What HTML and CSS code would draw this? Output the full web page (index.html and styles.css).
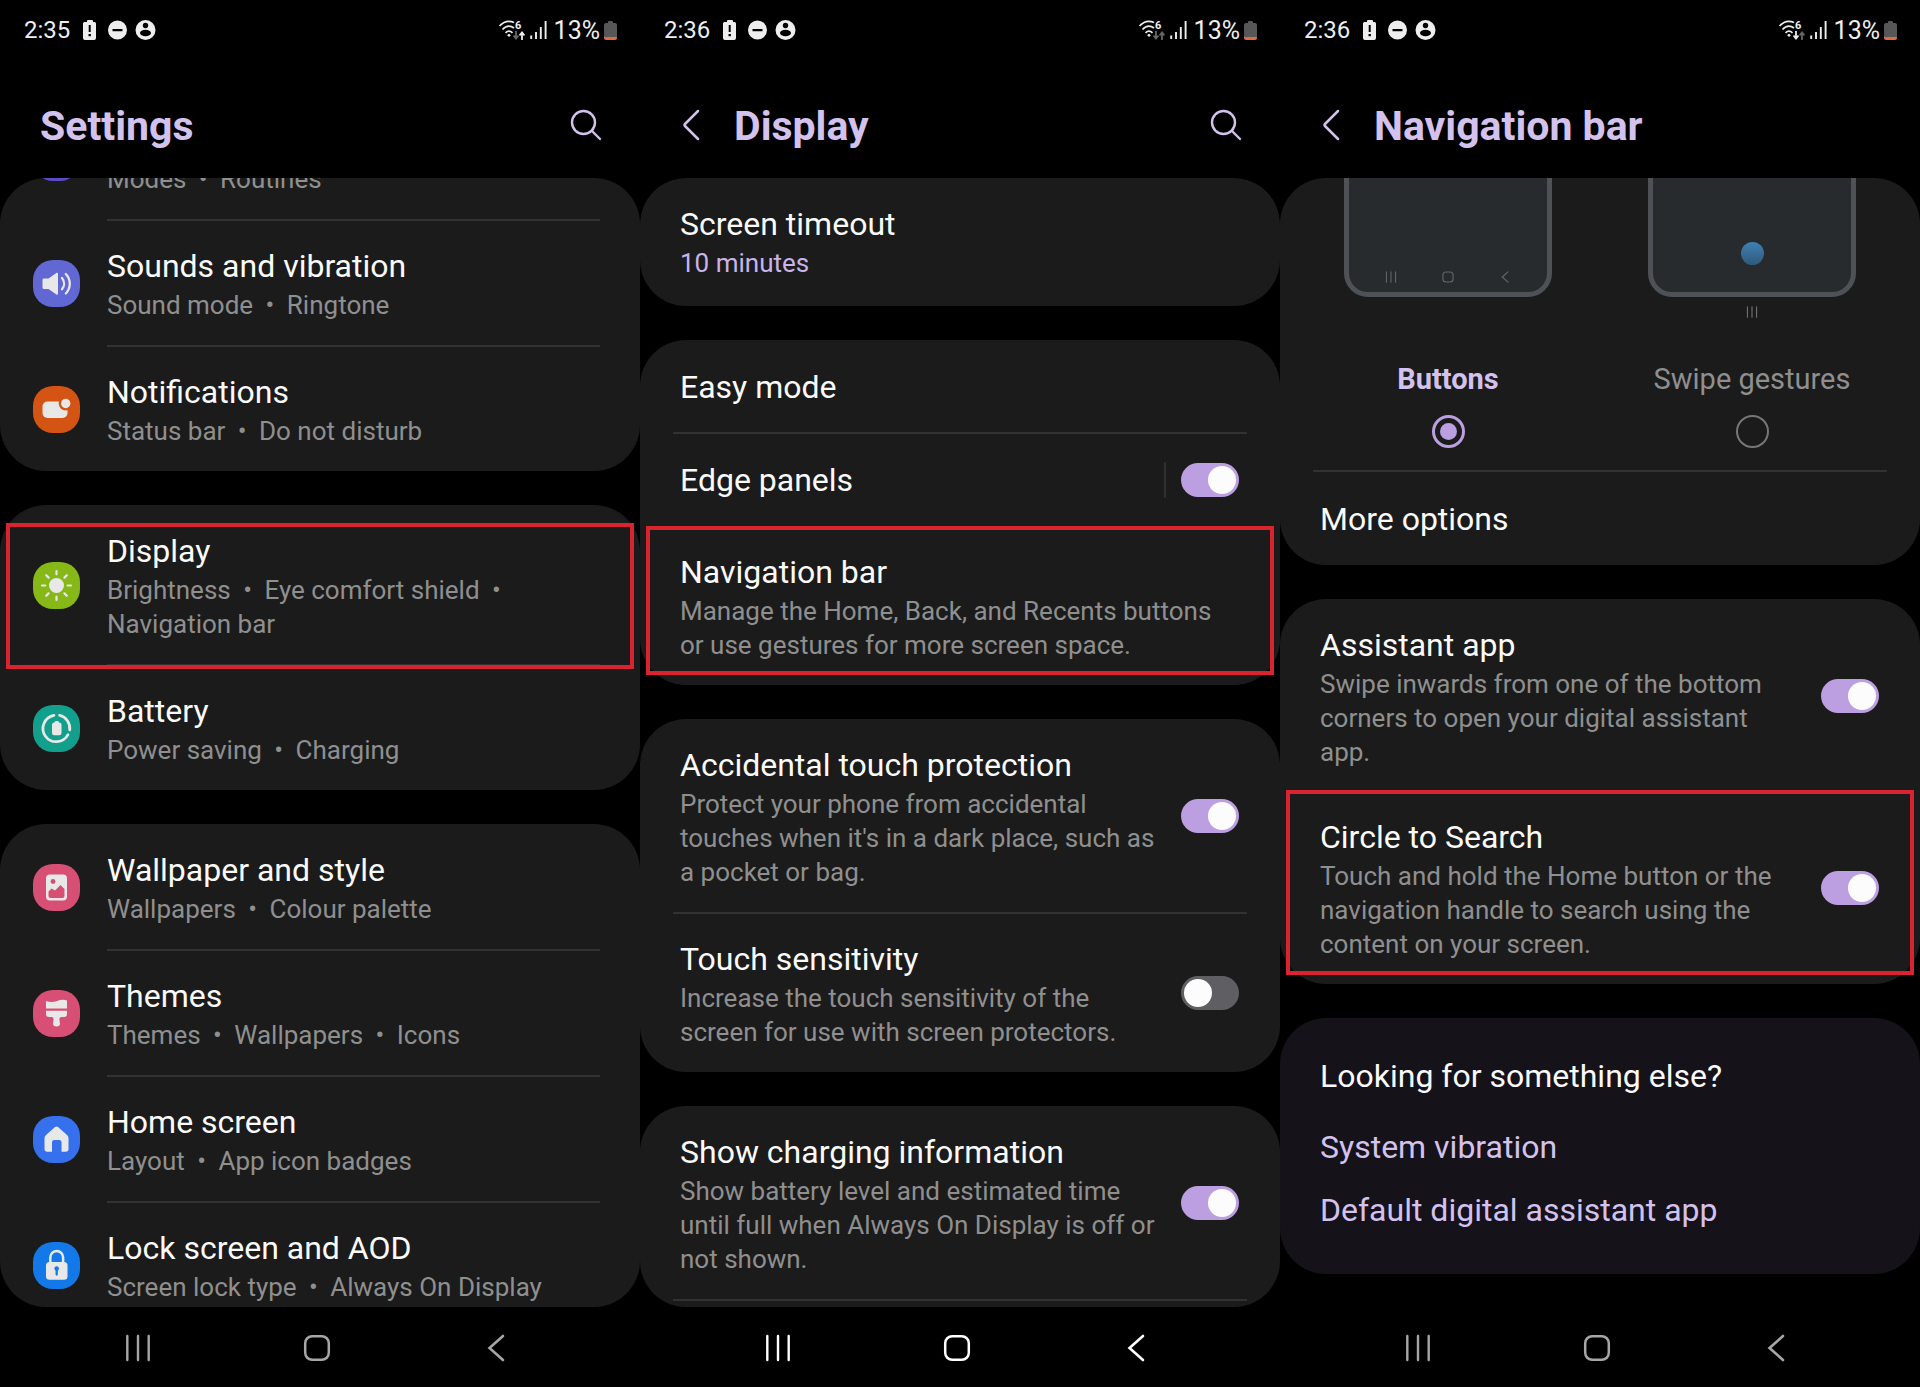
FILE: index.html
```html
<!DOCTYPE html>
<html lang="en">
  <head>
    <meta charset="UTF-8" />
    <meta name="viewport" content="width=device-width, initial-scale=1.0" />
    <title>Settings</title>
    <link rel="stylesheet" href="styles.css">
  </head>
  <body>
    <!-- Shared icons -->
    <svg class="sprite" aria-hidden="true">
      <symbol id="i-notices" viewBox="0 0 74 20">
        <path fill="currentColor" fill-rule="evenodd" d="M4 2V1q0-1 1-1h4q1 0 1 1v1h1.500Q13 2 13 3.500V18q0 2-2 2H2q-2 0-2-2V3.500Q0 2 1.500 2zM5.700 5v7h2V5zM5.500 14v2.300h2.400V14z" />
        <path fill="currentColor" fill-rule="evenodd" d="M34.500.500a9.500 9.500 0 1 1 0 19 9.500 9.500 0 0 1 0-19zM29.500 9v2.200h10V9z" />
        <circle cx="62.500" cy="10" r="10" fill="currentColor" />
        <circle cx="62.500" cy="5.500" r="2.700" />
        <ellipse cx="62.500" cy="13" rx="5.500" ry="3.300" />
      </symbol>
      <symbol id="i-wifi" viewBox="0 0 26 20">
        <g fill="none" stroke="currentColor" stroke-width="1.700">
          <path d="M.5 6Q7-1 15 2.500" />
          <path d="M3.500 9.500Q9 3.500 15 8" />
          <path d="M6.500 12.800q3.500-3.300 7 0" />
        </g>
        <circle cx="10" cy="15.300" r="1.400" fill="currentColor" />
        <text x="16" y="8.500" font-size="11" font-weight="700" fill="currentColor">6</text>
      </symbol>
      <symbol id="i-down" viewBox="0 0 6 9">
        <path d="M3 0v7M.5 4.500L3 7.500l2.500-3" fill="none" stroke="currentColor" stroke-width="1.800" />
      </symbol>
      <symbol id="i-up" viewBox="0 0 6 9">
        <path d="M3 9V2M.5 4.500L3 1.500l2.500 3" fill="none" stroke="currentColor" stroke-width="1.800" />
      </symbol>
      <symbol id="i-signal" viewBox="0 0 17 18">
        <path d="M1.200 18v-3.500M6 18v-7M10.800 18V6M15.600 18V0" stroke="currentColor" stroke-width="1.900" />
      </symbol>
      <symbol id="i-level" viewBox="0 0 13 19">
        <path fill="#575757" d="M4 2V1q0-1 1-1h3q1 0 1 1v1h2q2 0 2 2v12H0V4q0-2 2-2z" />
        <path fill="#e0694a" d="M0 16h13v1q0 2-2 2H2q-2 0-2-2z" />
      </symbol>
      <symbol id="i-search" viewBox="0 0 32 32">
        <g fill="none" stroke="currentColor" stroke-width="2.400" stroke-linecap="round">
          <circle cx="13.500" cy="13.500" r="11.500" />
          <path d="M22 22l8 8" />
        </g>
      </symbol>
      <symbol id="i-back" viewBox="0 0 18 32">
        <path d="M16 2L3 15q-1 1 0 2l13 13" fill="none" stroke="currentColor" stroke-width="2.500" stroke-linecap="round" />
      </symbol>
      <symbol id="i-recents" viewBox="0 0 28 28">
        <path d="M3.300 2v24M14 2v24M24.700 2v24" stroke="currentColor" stroke-width="2.400" stroke-linecap="round" />
      </symbol>
      <symbol id="i-home" viewBox="0 0 28 28">
        <rect x="2.200" y="2.200" width="23.600" height="23.600" rx="7" fill="none" stroke="currentColor" stroke-width="2.500" />
      </symbol>
      <symbol id="i-left" viewBox="0 0 28 28">
        <path d="M21 2L7.500 14 21 26" fill="none" stroke="currentColor" stroke-width="2.600" stroke-linecap="round" />
      </symbol>
    </svg>

    <main class="screens">
      <!-- Settings -->
      <section class="phone">
        <div class="status">
          <span>2:35</span>
          <svg class="notices"><use href="#i-notices" /></svg>
          <div class="status-right">
            <div class="wifi">
              <svg class="wifi-waves"><use href="#i-wifi" /></svg>
              <svg class="arrow arrow-down dim"><use href="#i-down" /></svg>
              <svg class="arrow arrow-up"><use href="#i-up" /></svg>
            </div>
            <svg class="signal"><use href="#i-signal" /></svg>
            <span class="percent">13%</span>
            <svg class="level"><use href="#i-level" /></svg>
          </div>
        </div>
        <header class="topbar">
          <h1>Settings</h1>
          <button class="search" aria-label="Search"><svg><use href="#i-search" /></svg></button>
        </header>
        <div class="viewport">
          <div class="list list-settings">
            <div class="card">
              <a class="row row-modes" href="#">
                <span class="icon icon-modes"></span>
                <span class="text">
                  <span class="sub">Modes <span class="dot">•</span> Routines</span>
                </span>
              </a>
              <a class="row" href="#">
                <span class="icon icon-sounds">
                  <svg viewBox="0 0 47 47">
                    <path fill="#e8e8e8" d="M11 18.500h4.500l7.500-5.300c1-.8 2-.4 2 .8v19.500c0 1.200-1 1.600-2 .8L15.500 29H11c-1 0-1.500-.6-1.500-1.500V20c0-.9.6-1.500 1.500-1.500z" />
                    <path d="M29 18c2.700 3.300 2.700 8 0 11.300M32.800 14c5.300 5.500 5.300 14 0 19.500" fill="none" stroke="#e8e8e8" stroke-width="2.300" stroke-linecap="round" />
                  </svg>
                </span>
                <span class="text">
                  <span class="title">Sounds and vibration</span>
                  <span class="sub">Sound mode <span class="dot">•</span> Ringtone</span>
                </span>
              </a>
              <a class="row" href="#">
                <span class="icon icon-notifications">
                  <svg viewBox="0 0 47 47">
                    <rect x="9.500" y="15.500" width="25" height="16.500" rx="5" fill="#e8e8e8" />
                    <circle cx="32.700" cy="17.500" r="7" fill="#d35413" />
                    <circle cx="32.700" cy="17.500" r="4.700" fill="#e8e8e8" />
                  </svg>
                </span>
                <span class="text">
                  <span class="title">Notifications</span>
                  <span class="sub">Status bar <span class="dot">•</span> Do not disturb</span>
                </span>
              </a>
            </div>
            <div class="card">
              <a class="row marked marked-display" href="#">
                <span class="icon icon-display">
                  <svg viewBox="0 0 47 47">
                    <circle cx="23.500" cy="23.500" r="7.500" fill="#e8e8e8" />
                    <path d="M23.500 9v3.300M23.500 34.700V38M9 23.500h3.300M34.700 23.500H38M13.200 13.200l2.400 2.400M31.400 31.400l2.400 2.400M33.800 13.200l-2.400 2.400M15.600 31.400l-2.400 2.400" stroke="#e8e8e8" stroke-width="2.200" stroke-linecap="round" />
                  </svg>
                </span>
                <span class="text">
                  <span class="title">Display</span>
                  <span class="sub">Brightness <span class="dot">•</span> Eye comfort shield <span class="dot">•</span> Navigation bar</span>
                </span>
              </a>
              <a class="row" href="#">
                <span class="icon icon-battery">
                  <svg viewBox="0 0 47 47">
                    <path d="M21 10.300a13.300 13.300 0 1 0 14 19.400M26.500 10.300A13.300 13.300 0 0 1 36.700 25" fill="none" stroke="#e8e8e8" stroke-width="2.700" stroke-linecap="round" />
                    <path fill="#e8e8e8" d="M21.500 17.500q0-1.500 1.500-1.500h1.500q1.500 0 1.500 1.500 2.500 0 2.500 2.500v8q0 2.300-2.300 2.300h-5Q19 30.300 19 28v-8q0-2.500 2.500-2.500z" />
                  </svg>
                </span>
                <span class="text">
                  <span class="title">Battery</span>
                  <span class="sub">Power saving <span class="dot">•</span> Charging</span>
                </span>
              </a>
            </div>
            <div class="card">
              <a class="row" href="#">
                <span class="icon icon-wallpaper">
                  <svg viewBox="0 0 47 47">
                    <rect x="13" y="10.500" width="21" height="26" rx="4" fill="#e8e8e8" />
                    <circle cx="20" cy="17.500" r="2.400" fill="#d84f76" />
                    <path fill="#d84f76" d="M15.500 27.500l3-3 3.500 2 5.500-5.500 4 4V32q0 2-2 2h-12q-2 0-2-2z" />
                  </svg>
                </span>
                <span class="text">
                  <span class="title">Wallpaper and style</span>
                  <span class="sub">Wallpapers <span class="dot">•</span> Colour palette</span>
                </span>
              </a>
              <a class="row" href="#">
                <span class="icon icon-themes">
                  <svg viewBox="0 0 47 47">
                    <path fill="#e8e8e8" d="M13 11q6 2 11 0t10-.5v8H13z" />
                    <path fill="#e8e8e8" d="M13 20.700h21V24q0 3-3 3h-3q-2 .5-1.500 3l.5 4q-.5 2.500-3.500 2.500T20 34l.5-4q.5-2.500-1.500-3h-3q-3 0-3-3z" />
                  </svg>
                </span>
                <span class="text">
                  <span class="title">Themes</span>
                  <span class="sub">Themes <span class="dot">•</span> Wallpapers <span class="dot">•</span> Icons</span>
                </span>
              </a>
              <a class="row" href="#">
                <span class="icon icon-homescreen">
                  <svg viewBox="0 0 47 47">
                    <path fill="#e8e8e8" d="M22 11q1.500-1.200 3 0l9 8q1.500 1.300 1.500 3v11q0 2.700-2.700 2.700H28.500v-9.500q0-2.200-2.200-2.200h-5.100q-2.200 0-2.200 2.200v9.500h-4.800q-2.700 0-2.700-2.700V22q0-1.700 1.500-3z" />
                  </svg>
                </span>
                <span class="text">
                  <span class="title">Home screen</span>
                  <span class="sub">Layout <span class="dot">•</span> App icon badges</span>
                </span>
              </a>
              <a class="row" href="#">
                <span class="icon icon-lock">
                  <svg viewBox="0 0 47 47">
                    <path d="M17.300 21v-5.500a6.400 6.400 0 0 1 12.800 0V21" fill="none" stroke="#e8e8e8" stroke-width="2.500" />
                    <rect x="13" y="20" width="21.500" height="17.800" rx="3.500" fill="#e8e8e8" />
                    <circle cx="23.700" cy="26.500" r="2.300" fill="#1479e8" />
                    <path d="M23.700 27v5.500" stroke="#1479e8" stroke-width="2.300" stroke-linecap="round" />
                  </svg>
                </span>
                <span class="text">
                  <span class="title">Lock screen and AOD</span>
                  <span class="sub">Screen lock type <span class="dot">•</span> Always On Display</span>
                </span>
              </a>
            </div>
          </div>
        </div>
        <nav class="navbar">
          <button aria-label="Recents"><svg><use href="#i-recents" /></svg></button>
          <button aria-label="Home"><svg><use href="#i-home" /></svg></button>
          <button aria-label="Back"><svg><use href="#i-left" /></svg></button>
        </nav>
      </section>

      <!-- Display -->
      <section class="phone">
        <div class="status">
          <span>2:36</span>
          <svg class="notices"><use href="#i-notices" /></svg>
          <div class="status-right">
            <div class="wifi">
              <svg class="wifi-waves"><use href="#i-wifi" /></svg>
              <svg class="arrow arrow-down dim"><use href="#i-down" /></svg>
              <svg class="arrow arrow-up dim"><use href="#i-up" /></svg>
            </div>
            <svg class="signal"><use href="#i-signal" /></svg>
            <span class="percent">13%</span>
            <svg class="level"><use href="#i-level" /></svg>
          </div>
        </div>
        <header class="topbar">
          <button class="back" aria-label="Back"><svg><use href="#i-back" /></svg></button>
          <h1>Display</h1>
          <button class="search" aria-label="Search"><svg><use href="#i-search" /></svg></button>
        </header>
        <div class="viewport">
          <div class="list">
            <div class="card card-timeout">
              <a class="row row-plain" href="#">
                <span class="text">
                  <span class="title">Screen timeout</span>
                  <span class="sub sub-value">10 minutes</span>
                </span>
              </a>
            </div>
            <div class="card">
              <a class="row row-plain row-single" href="#">
                <span class="text"><span class="title">Easy mode</span></span>
              </a>
              <div class="row row-plain row-single">
                <label class="text" for="edge"><span class="title">Edge panels</span></label>
                <span class="split"></span>
                <input type="checkbox" class="switch" id="edge" checked />
              </div>
              <a class="row row-plain marked marked-nav" href="#">
                <span class="text">
                  <span class="title">Navigation bar</span>
                  <span class="sub">Manage the Home, Back, and Recents buttons or use gestures for more screen space.</span>
                </span>
              </a>
            </div>
            <div class="card">
              <label class="row row-plain">
                <span class="text">
                  <span class="title">Accidental touch protection</span>
                  <span class="sub">Protect your phone from accidental touches when it's in a dark place, such as a pocket or bag.</span>
                </span>
                <input type="checkbox" class="switch" checked />
              </label>
              <label class="row row-plain">
                <span class="text">
                  <span class="title">Touch sensitivity</span>
                  <span class="sub">Increase the touch sensitivity of the screen for use with screen protectors.</span>
                </span>
                <input type="checkbox" class="switch" />
              </label>
            </div>
            <div class="card card-more">
              <label class="row row-plain">
                <span class="text">
                  <span class="title">Show charging information</span>
                  <span class="sub">Show battery level and estimated time until full when Always On Display is off or not shown.</span>
                </span>
                <input type="checkbox" class="switch" checked />
              </label>
            </div>
          </div>
        </div>
        <nav class="navbar navbar-bright">
          <button aria-label="Recents"><svg><use href="#i-recents" /></svg></button>
          <button aria-label="Home"><svg><use href="#i-home" /></svg></button>
          <button aria-label="Back"><svg><use href="#i-left" /></svg></button>
        </nav>
      </section>

      <!-- Navigation bar -->
      <section class="phone">
        <div class="status">
          <span>2:36</span>
          <svg class="notices"><use href="#i-notices" /></svg>
          <div class="status-right">
            <div class="wifi">
              <svg class="wifi-waves"><use href="#i-wifi" /></svg>
              <svg class="arrow arrow-down"><use href="#i-down" /></svg>
              <svg class="arrow arrow-up dim"><use href="#i-up" /></svg>
            </div>
            <svg class="signal"><use href="#i-signal" /></svg>
            <span class="percent">13%</span>
            <svg class="level"><use href="#i-level" /></svg>
          </div>
        </div>
        <header class="topbar">
          <button class="back" aria-label="Back"><svg><use href="#i-back" /></svg></button>
          <h1>Navigation bar</h1>
        </header>
        <div class="viewport">
          <div class="list list-navigation">
            <div class="card">
              <div class="choices">
                <label class="choice">
                  <span class="device">
                    <svg><use href="#i-recents" /></svg>
                    <svg><use href="#i-home" /></svg>
                    <svg><use href="#i-left" /></svg>
                  </span>
                  <span class="device-foot"></span>
                  <span class="choice-name choice-name-on">Buttons</span>
                  <input type="radio" class="radio" name="navigation" checked />
                </label>
                <label class="choice">
                  <span class="device"><span class="finger"></span></span>
                  <span class="device-foot"><svg><use href="#i-recents" /></svg></span>
                  <span class="choice-name">Swipe gestures</span>
                  <input type="radio" class="radio" name="navigation" />
                </label>
              </div>
              <a class="row row-plain row-single" href="#">
                <span class="text"><span class="title">More options</span></span>
              </a>
            </div>
            <div class="card">
              <label class="row row-plain">
                <span class="text">
                  <span class="title">Assistant app</span>
                  <span class="sub">Swipe inwards from one of the bottom corners to open your digital assistant app.</span>
                </span>
                <input type="checkbox" class="switch" checked />
              </label>
              <label class="row row-plain marked marked-circle">
                <span class="text">
                  <span class="title">Circle to Search</span>
                  <span class="sub">Touch and hold the Home button or the navigation handle to search using the content on your screen.</span>
                </span>
                <input type="checkbox" class="switch" checked />
              </label>
            </div>
            <div class="related">
              <h2>Looking for something else?</h2>
              <a href="#">System vibration</a>
              <a href="#">Default digital assistant app</a>
            </div>
          </div>
        </div>
        <nav class="navbar">
          <button aria-label="Recents"><svg><use href="#i-recents" /></svg></button>
          <button aria-label="Home"><svg><use href="#i-home" /></svg></button>
          <button aria-label="Back"><svg><use href="#i-left" /></svg></button>
        </nav>
      </section>
    </main>
  </body>
</html>
```
FILE: styles.css
```css
/* Reset CSS */
* {
  box-sizing: border-box;
}

body {
  margin: 0;
  background-color: #000;
  color: #fafafa;
  font-family: Roboto, "Noto Sans", sans-serif;
}

h1,
h2 {
  margin: 0;
}

a {
  color: inherit;
  text-decoration: none;
}

button {
  display: flex;
  padding: 0;
  border: 0;
  background: none;
  color: inherit;
}

input {
  margin: 0;
}

.sprite {
  display: none;
}

/* Layout */
.screens {
  display: grid;
  grid-template-columns: repeat(3, 1fr);
  height: 100vh;
}

.phone {
  display: flex;
  flex-direction: column;
  min-width: 0;
  min-height: 0;
}

.viewport {
  flex: 1;
  min-height: 0;
  overflow: hidden;
  border-radius: 46px;
}

.list {
  display: flex;
  flex-direction: column;
  gap: 34px;
}

/* scrolled part way down */
.list-settings {
  margin-top: -84px;
}

.list-navigation {
  margin-top: -200px;
}

/* Status bar */
.status {
  display: flex;
  align-items: center;
  height: 60px;
  padding: 0 23px 0 24px;
  font-size: 24px;
  color: #eee;
}

.notices {
  width: 74px;
  height: 20px;
  margin-left: 13px;
}

.status-right {
  display: flex;
  align-items: center;
  margin-left: auto;
}

.wifi {
  position: relative;
  width: 26px;
  height: 20px;
}

.wifi-waves {
  display: block;
  width: 26px;
  height: 20px;
}

.arrow {
  position: absolute;
  bottom: 0;
  width: 6px;
  height: 9px;
}

.arrow-down {
  right: 6px;
}

.arrow-up {
  right: 0;
}

.dim {
  color: #666;
}

.signal {
  width: 17px;
  height: 18px;
  margin: 0 7px 0 5px;
}

.percent {
  font-size: 25px;
}

.level {
  width: 13px;
  height: 19px;
  margin-left: 4px;
}

/* Title bar */
.topbar {
  display: flex;
  align-items: center;
  height: 118px;
  padding: 0 38px 0 40px;
  color: #d3c2ee;
}

.topbar h1 {
  padding-top: 14px;
  font-size: 41px;
  font-weight: 700;
  line-height: 48px;
}

.back {
  margin: 11px 34px 0 2px;
}

.back svg {
  width: 18px;
  height: 32px;
}

.search {
  margin: 11px 0 0 auto;
}

.search svg {
  width: 32px;
  height: 32px;
}

/* Cards */
.card {
  padding-top: 1px;
  border-radius: 46px;
  background-color: #1b1b1b;
}

.card-timeout {
  padding-bottom: 3px;
}

.card-more {
  padding-bottom: 60px;
}

.row {
  position: relative;
  display: flex;
  align-items: center;
  padding: 23px 40px 23px 33px;
}

.row-plain {
  padding-left: 40px;
}

.row-single {
  min-height: 93px;
}

.row-modes {
  min-height: 126px;
}

.row-modes .text {
  align-self: flex-end;
}

/* divider under every row but the last */
.row:not(:last-child),
.card-more .row {
  padding-bottom: 25px;
}

.row:not(:last-child)::after,
.card-more .row::after {
  content: "";
  position: absolute;
  right: 40px;
  bottom: 0;
  left: 107px;
  height: 2px;
  background-color: #323232;
}

.row-plain:not(:last-child)::after,
.card-more .row::after {
  right: 33px;
  left: 33px;
}

.row:has(+ .marked-nav)::after,
.row:has(+ .marked-circle)::after {
  display: none;
}

.row.row-plain:has(+ .marked-circle) {
  padding-bottom: 23px;
}

.text {
  flex: 1;
  min-width: 0;
}

.title {
  display: block;
  font-size: 32px;
  line-height: 44px;
}

.sub {
  display: block;
  color: #8f8f8f;
  font-size: 26px;
  line-height: 34px;
}

.sub-value {
  color: #c9b3e8;
}

.dot {
  margin: 0 6px;
}

/* Red frame round a row */
.marked::before {
  content: "";
  position: absolute;
  right: 6px;
  left: 6px;
  z-index: 1;
  border: 4px solid #d9232e;
}

.marked-display::before {
  top: 17px;
  bottom: -3px;
}

.marked-nav::before {
  top: -1px;
  bottom: 10px;
}

.marked-circle::before {
  top: -2px;
  bottom: 9px;
}

/* Row icons */
.icon {
  flex: none;
  width: 47px;
  height: 47px;
  margin-right: 27px;
  border-radius: 20px;
}

.icon svg {
  display: block;
  width: 47px;
  height: 47px;
}

.icon-modes {
  background-color: #5b4bc4;
}

.icon-sounds {
  background-color: #6167d3;
}

.icon-notifications {
  background-color: #d35413;
}

.icon-display {
  background-color: #86b817;
}

.icon-battery {
  background-color: #12a08c;
}

.icon-wallpaper,
.icon-themes {
  background-color: #d84f76;
}

.icon-homescreen {
  background-color: #3770ec;
}

.icon-lock {
  background-color: #1479e8;
}

/* Switch */
.switch {
  display: flex;
  flex: none;
  justify-content: flex-start;
  width: 58px;
  height: 34px;
  margin-right: 1px;
  margin-left: 24px;
  padding: 3px;
  appearance: none;
  border-radius: 17px;
  background-color: #5f5f63;
}

.switch::before {
  content: "";
  width: 28px;
  height: 28px;
  border-radius: 50%;
  background-color: #fcfcfc;
}

.switch:checked {
  justify-content: flex-end;
  background-color: #bb9fe0;
}

.split {
  width: 2px;
  height: 36px;
  background-color: #303030;
}

.split + .switch {
  margin-left: 15px;
}

/* Navigation type */
.choices {
  position: relative;
  display: grid;
  grid-template-columns: 1fr 1fr;
  padding: 23px 16px 24px;
}

.choices::after {
  content: "";
  position: absolute;
  right: 33px;
  bottom: 0;
  left: 33px;
  height: 2px;
  background-color: #323232;
}

.choice {
  display: flex;
  flex-direction: column;
  align-items: center;
}

.device {
  display: flex;
  align-items: flex-end;
  justify-content: center;
  gap: 45px;
  width: 208px;
  height: 295px;
  padding-bottom: 9px;
  border: 5px solid #4e5256;
  border-radius: 24px;
  background-color: #282b2e;
  color: #63676b;
}

.device svg,
.device-foot svg {
  width: 12px;
  height: 12px;
}

.finger {
  width: 23px;
  height: 23px;
  margin-bottom: 18px;
  border-radius: 50%;
  background: linear-gradient(#3f80b5, #30597a);
}

.device-foot {
  height: 64px;
  padding-top: 9px;
  line-height: 0;
  color: #777;
}

.choice-name {
  color: #8f8f8f;
  font-size: 29px;
  line-height: 36px;
}

.choice-name-on {
  color: #d3c2ee;
  font-weight: 700;
}

.radio {
  display: grid;
  place-items: center;
  width: 33px;
  height: 33px;
  margin-top: 18px;
  appearance: none;
  border: 2px solid #777;
  border-radius: 50%;
}

.radio:checked {
  border: 3px solid #bb9fe0;
}

.radio:checked::before {
  content: "";
  width: 17px;
  height: 17px;
  border-radius: 50%;
  background-color: #bb9fe0;
}

/* Related links */
.related {
  display: flex;
  flex-direction: column;
  align-items: flex-start;
  gap: 19px;
  padding: 36px 40px 42px;
  border-radius: 46px;
  background-color: #15121a;
  font-size: 32px;
  line-height: 44px;
}

.related h2 {
  margin-bottom: 8px;
  font-size: 32px;
  font-weight: 400;
}

.related a {
  color: #d3c2ee;
}

/* Bottom buttons */
.navbar {
  display: flex;
  align-items: center;
  justify-content: center;
  gap: 151px;
  height: 80px;
  padding: 2px 6px 0 0;
  color: #a6a6a6;
}

.navbar-bright {
  color: #fff;
}

.navbar svg {
  width: 28px;
  height: 28px;
}
```
